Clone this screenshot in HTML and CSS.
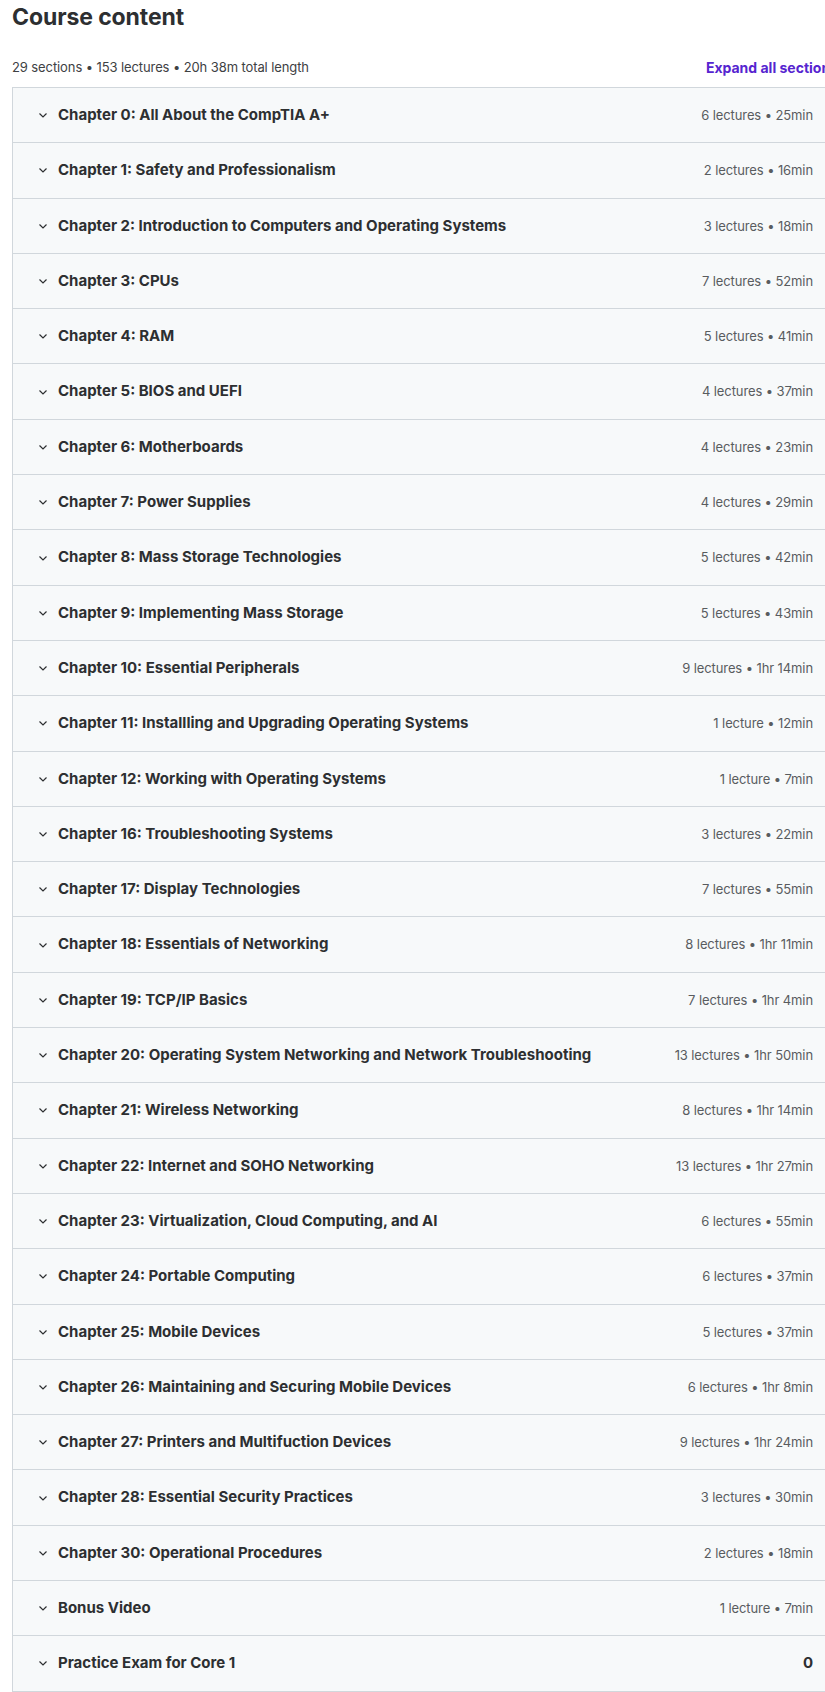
FILE: index.html
```html
<!DOCTYPE html>
<html lang="en">
<head>
    <meta charset="UTF-8">
    <meta name="viewport" content="width=device-width, initial-scale=1.0">
    <title>Course content</title>
    <link rel="stylesheet" href="styles.css">
</head>
<body>
    <div class="course-content">
        <h2 class="title">Course content</h2>
        <div class="summary">
            <span>29 sections • 153 lectures • 20h 38m total length</span>
            <button class="expand-all">Expand all sections</button>
        </div>
        <div class="sections">
            <div class="section"><span class="chevron"><svg viewBox="0 0 16 16"><path d="M4.5 6.5 8 10l3.5-3.5"/></svg></span><span class="section-title">Chapter 0: All About the CompTIA A+</span><span class="section-meta">6 lectures • 25min</span></div>
            <div class="section"><span class="chevron"><svg viewBox="0 0 16 16"><path d="M4.5 6.5 8 10l3.5-3.5"/></svg></span><span class="section-title">Chapter 1: Safety and Professionalism</span><span class="section-meta">2 lectures • 16min</span></div>
            <div class="section"><span class="chevron"><svg viewBox="0 0 16 16"><path d="M4.5 6.5 8 10l3.5-3.5"/></svg></span><span class="section-title">Chapter 2: Introduction to Computers and Operating Systems</span><span class="section-meta">3 lectures • 18min</span></div>
            <div class="section"><span class="chevron"><svg viewBox="0 0 16 16"><path d="M4.5 6.5 8 10l3.5-3.5"/></svg></span><span class="section-title">Chapter 3: CPUs</span><span class="section-meta">7 lectures • 52min</span></div>
            <div class="section"><span class="chevron"><svg viewBox="0 0 16 16"><path d="M4.5 6.5 8 10l3.5-3.5"/></svg></span><span class="section-title">Chapter 4: RAM</span><span class="section-meta">5 lectures • 41min</span></div>
            <div class="section"><span class="chevron"><svg viewBox="0 0 16 16"><path d="M4.5 6.5 8 10l3.5-3.5"/></svg></span><span class="section-title">Chapter 5: BIOS and UEFI</span><span class="section-meta">4 lectures • 37min</span></div>
            <div class="section"><span class="chevron"><svg viewBox="0 0 16 16"><path d="M4.5 6.5 8 10l3.5-3.5"/></svg></span><span class="section-title">Chapter 6: Motherboards</span><span class="section-meta">4 lectures • 23min</span></div>
            <div class="section"><span class="chevron"><svg viewBox="0 0 16 16"><path d="M4.5 6.5 8 10l3.5-3.5"/></svg></span><span class="section-title">Chapter 7: Power Supplies</span><span class="section-meta">4 lectures • 29min</span></div>
            <div class="section"><span class="chevron"><svg viewBox="0 0 16 16"><path d="M4.5 6.5 8 10l3.5-3.5"/></svg></span><span class="section-title">Chapter 8: Mass Storage Technologies</span><span class="section-meta">5 lectures • 42min</span></div>
            <div class="section"><span class="chevron"><svg viewBox="0 0 16 16"><path d="M4.5 6.5 8 10l3.5-3.5"/></svg></span><span class="section-title">Chapter 9: Implementing Mass Storage</span><span class="section-meta">5 lectures • 43min</span></div>
            <div class="section"><span class="chevron"><svg viewBox="0 0 16 16"><path d="M4.5 6.5 8 10l3.5-3.5"/></svg></span><span class="section-title">Chapter 10: Essential Peripherals</span><span class="section-meta">9 lectures • 1hr 14min</span></div>
            <div class="section"><span class="chevron"><svg viewBox="0 0 16 16"><path d="M4.5 6.5 8 10l3.5-3.5"/></svg></span><span class="section-title">Chapter 11: Installling and Upgrading Operating Systems</span><span class="section-meta">1 lecture • 12min</span></div>
            <div class="section"><span class="chevron"><svg viewBox="0 0 16 16"><path d="M4.5 6.5 8 10l3.5-3.5"/></svg></span><span class="section-title">Chapter 12: Working with Operating Systems</span><span class="section-meta">1 lecture • 7min</span></div>
            <div class="section"><span class="chevron"><svg viewBox="0 0 16 16"><path d="M4.5 6.5 8 10l3.5-3.5"/></svg></span><span class="section-title">Chapter 16: Troubleshooting Systems</span><span class="section-meta">3 lectures • 22min</span></div>
            <div class="section"><span class="chevron"><svg viewBox="0 0 16 16"><path d="M4.5 6.5 8 10l3.5-3.5"/></svg></span><span class="section-title">Chapter 17: Display Technologies</span><span class="section-meta">7 lectures • 55min</span></div>
            <div class="section"><span class="chevron"><svg viewBox="0 0 16 16"><path d="M4.5 6.5 8 10l3.5-3.5"/></svg></span><span class="section-title">Chapter 18: Essentials of Networking</span><span class="section-meta">8 lectures • 1hr 11min</span></div>
            <div class="section"><span class="chevron"><svg viewBox="0 0 16 16"><path d="M4.5 6.5 8 10l3.5-3.5"/></svg></span><span class="section-title">Chapter 19: TCP/IP Basics</span><span class="section-meta">7 lectures • 1hr 4min</span></div>
            <div class="section"><span class="chevron"><svg viewBox="0 0 16 16"><path d="M4.5 6.5 8 10l3.5-3.5"/></svg></span><span class="section-title">Chapter 20: Operating System Networking and Network Troubleshooting</span><span class="section-meta">13 lectures • 1hr 50min</span></div>
            <div class="section"><span class="chevron"><svg viewBox="0 0 16 16"><path d="M4.5 6.5 8 10l3.5-3.5"/></svg></span><span class="section-title">Chapter 21: Wireless Networking</span><span class="section-meta">8 lectures • 1hr 14min</span></div>
            <div class="section"><span class="chevron"><svg viewBox="0 0 16 16"><path d="M4.5 6.5 8 10l3.5-3.5"/></svg></span><span class="section-title">Chapter 22: Internet and SOHO Networking</span><span class="section-meta">13 lectures • 1hr 27min</span></div>
            <div class="section"><span class="chevron"><svg viewBox="0 0 16 16"><path d="M4.5 6.5 8 10l3.5-3.5"/></svg></span><span class="section-title">Chapter 23: Virtualization, Cloud Computing, and AI</span><span class="section-meta">6 lectures • 55min</span></div>
            <div class="section"><span class="chevron"><svg viewBox="0 0 16 16"><path d="M4.5 6.5 8 10l3.5-3.5"/></svg></span><span class="section-title">Chapter 24: Portable Computing</span><span class="section-meta">6 lectures • 37min</span></div>
            <div class="section"><span class="chevron"><svg viewBox="0 0 16 16"><path d="M4.5 6.5 8 10l3.5-3.5"/></svg></span><span class="section-title">Chapter 25: Mobile Devices</span><span class="section-meta">5 lectures • 37min</span></div>
            <div class="section"><span class="chevron"><svg viewBox="0 0 16 16"><path d="M4.5 6.5 8 10l3.5-3.5"/></svg></span><span class="section-title">Chapter 26: Maintaining and Securing Mobile Devices</span><span class="section-meta">6 lectures • 1hr 8min</span></div>
            <div class="section"><span class="chevron"><svg viewBox="0 0 16 16"><path d="M4.5 6.5 8 10l3.5-3.5"/></svg></span><span class="section-title">Chapter 27: Printers and Multifuction Devices</span><span class="section-meta">9 lectures • 1hr 24min</span></div>
            <div class="section"><span class="chevron"><svg viewBox="0 0 16 16"><path d="M4.5 6.5 8 10l3.5-3.5"/></svg></span><span class="section-title">Chapter 28: Essential Security Practices</span><span class="section-meta">3 lectures • 30min</span></div>
            <div class="section"><span class="chevron"><svg viewBox="0 0 16 16"><path d="M4.5 6.5 8 10l3.5-3.5"/></svg></span><span class="section-title">Chapter 30: Operational Procedures</span><span class="section-meta">2 lectures • 18min</span></div>
            <div class="section"><span class="chevron"><svg viewBox="0 0 16 16"><path d="M4.5 6.5 8 10l3.5-3.5"/></svg></span><span class="section-title">Bonus Video</span><span class="section-meta">1 lecture • 7min</span></div>
            <div class="section"><span class="chevron"><svg viewBox="0 0 16 16"><path d="M4.5 6.5 8 10l3.5-3.5"/></svg></span><span class="section-title">Practice Exam for Core 1</span><span class="section-meta strong">0</span></div>
        </div>
    </div>
</body>
</html>
```

FILE: styles.css
```css
/* Styles généraux */
html {
    overflow: hidden;
}
body {
    margin: 0;
    padding: 0;
    font-family: Inter, "Noto Sans", sans-serif;
    color: #2d2f31;
    background: #fff;
}
.course-content {
    width: 826px;
    padding: 2px 0 0 12px;
}
.title {
    margin: 0;
    font-size: 23px;
    line-height: 30px;
    font-weight: 700;
    letter-spacing: -0.1px;
}
.summary {
    display: flex;
    justify-content: space-between;
    align-items: center;
    margin: 25px 0 10px;
    font-size: 13px;
    line-height: 20px;
    letter-spacing: -0.1px;
    color: #3e4143;
}
.expand-all {
    background: none;
    border: none;
    padding: 0;
    font-family: inherit;
    font-size: 14px;
    font-weight: 700;
    color: #5624d0;
    cursor: pointer;
}
.sections {
    border: 1px solid #d1d7dc;
    border-top: none;
}
.section {
    display: flex;
    align-items: center;
    padding: 16px 24px 16px 22px;
    line-height: 22.3px;
    background: #f7f9fa;
    border-top: 1px solid #d1d7dc;
}
.chevron {
    width: 16px;
    height: 16px;
    margin-right: 7px;
    display: flex;
}
.chevron svg {
    width: 16px;
    height: 16px;
    fill: none;
    stroke: #2d2f31;
    stroke-width: 1.2;
}
.section-title {
    flex: 1;
    font-size: 15px;
    font-weight: 700;
}
.section-meta {
    font-size: 13px;
    letter-spacing: -0.1px;
    color: #595c5f;
}
.section-meta.strong {
    font-size: 15px;
    font-weight: 700;
    color: #2d2f31;
}
```
